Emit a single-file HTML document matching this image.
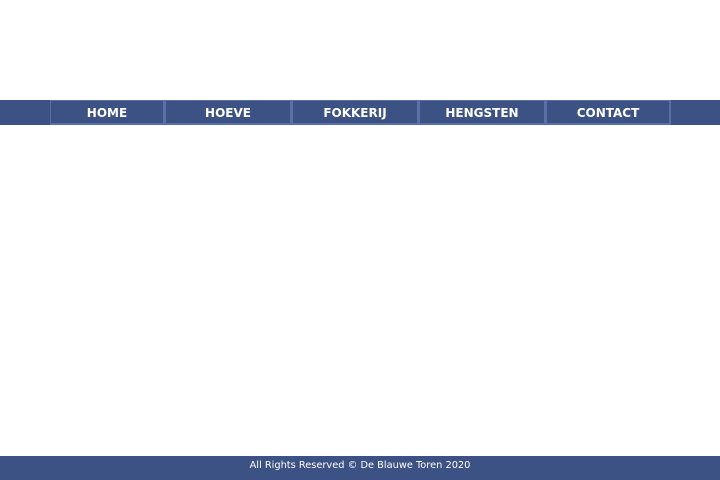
<!DOCTYPE html>
<html><head><style>
body{margin:0;width:720px;height:480px;background:#fff;position:relative;overflow:hidden;font-family:"DejaVu Sans","Liberation Sans",sans-serif}
.bar{position:absolute;left:0;top:100px;width:720px;height:25px;background:#3c5184}
.lt{position:absolute;left:50px;top:100px;width:621px;height:25px;background:#5a6ea8}
.b{position:absolute;top:101px;height:22px;background:#3c5184;color:#fff;font-weight:bold;font-size:12px;line-height:25px;text-align:center}
.f{position:absolute;left:0;top:456px;width:720px;height:24px;background:#3c5184;color:#fff;font-size:9.8px;line-height:19px;text-align:center}
</style></head><body>
<div class="bar"></div><div class="lt"></div>
<div class="b" style="left:51px;width:112px">HOME</div>
<div class="b" style="left:166px;width:124px">HOEVE</div>
<div class="b" style="left:293px;width:124px">FOKKERIJ</div>
<div class="b" style="left:420px;width:124px">HENGSTEN</div>
<div class="b" style="left:547px;width:122px">CONTACT</div>
<div class="f">All Rights Reserved © De Blauwe Toren 2020</div>
</body></html>
